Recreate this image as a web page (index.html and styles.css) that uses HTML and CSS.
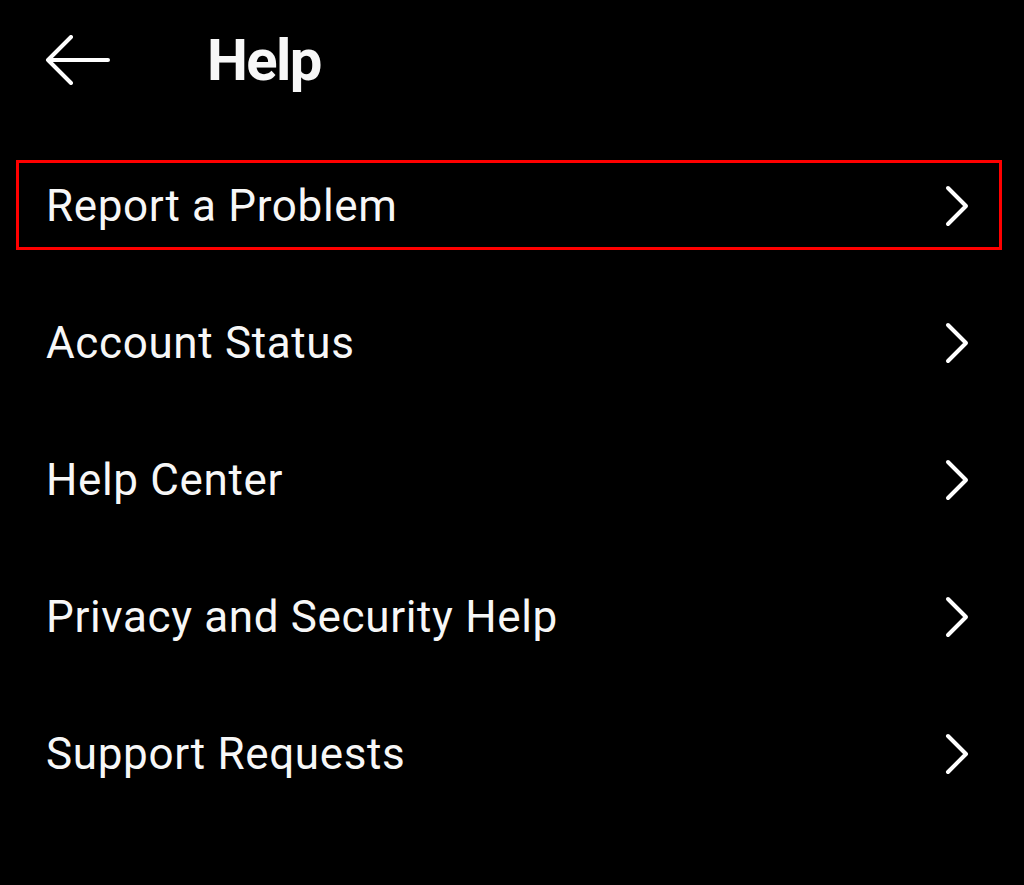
FILE: index.html
```html
<!DOCTYPE html>
<html lang="en">
<head>
    <meta charset="UTF-8">
    <meta name="viewport" content="width=device-width, initial-scale=1.0">
    <title>Help</title>
    <link rel="stylesheet" href="styles.css">
</head>
<body>
    <!-- Top bar -->
    <header class="top-bar">
        <svg class="back-icon" width="68" height="50" viewBox="0 0 68 50">
            <path d="M64 25 H4 M27 2 L4 25 L27 48" fill="none" stroke="#fff" stroke-width="4" stroke-linecap="round" stroke-linejoin="round"/>
        </svg>
        <h1 class="title">Help</h1>
    </header>

    <!-- Help options -->
    <ul class="menu">
        <li class="menu-item highlight">
            <span>Report a Problem</span>
            <svg class="chevron" width="26" height="42" viewBox="0 0 26 42"><path d="M4 3 L22 21 L4 39" fill="none" stroke="#fff" stroke-width="4" stroke-linecap="round" stroke-linejoin="round"/></svg>
        </li>
        <li class="menu-item">
            <span>Account Status</span>
            <svg class="chevron" width="26" height="42" viewBox="0 0 26 42"><path d="M4 3 L22 21 L4 39" fill="none" stroke="#fff" stroke-width="4" stroke-linecap="round" stroke-linejoin="round"/></svg>
        </li>
        <li class="menu-item">
            <span>Help Center</span>
            <svg class="chevron" width="26" height="42" viewBox="0 0 26 42"><path d="M4 3 L22 21 L4 39" fill="none" stroke="#fff" stroke-width="4" stroke-linecap="round" stroke-linejoin="round"/></svg>
        </li>
        <li class="menu-item">
            <span>Privacy and Security Help</span>
            <svg class="chevron" width="26" height="42" viewBox="0 0 26 42"><path d="M4 3 L22 21 L4 39" fill="none" stroke="#fff" stroke-width="4" stroke-linecap="round" stroke-linejoin="round"/></svg>
        </li>
        <li class="menu-item">
            <span>Support Requests</span>
            <svg class="chevron" width="26" height="42" viewBox="0 0 26 42"><path d="M4 3 L22 21 L4 39" fill="none" stroke="#fff" stroke-width="4" stroke-linecap="round" stroke-linejoin="round"/></svg>
        </li>
    </ul>
</body>
</html>
```

FILE: styles.css
```css
body {
    margin: 0;
    background-color: #000;
    color: #f7f7f7;
    font-family: Roboto, 'Noto Sans', sans-serif;
    height: 885px;
    overflow: hidden;
}
.top-bar {
    height: 120px;
    display: flex;
    align-items: center;
    padding-left: 44px;
}
.back-icon {
    display: block;
}
.title {
    margin: 0 0 0 95px;
    font-size: 58px;
    font-weight: 700;
    letter-spacing: -1.6px;
    line-height: 1;
}
.menu {
    list-style: none;
    margin: 0;
    padding: 17px 0 0 0;
}
.menu-item {
    position: relative;
    height: 137px;
    display: flex;
    align-items: center;
    justify-content: space-between;
    padding: 0 54px 0 46px;
    font-size: 44px;
    letter-spacing: 0.65px;
}
.chevron {
    display: block;
}
.highlight::after {
    content: "";
    position: absolute;
    top: 23px;
    bottom: 24px;
    left: 16px;
    right: 22px;
    border: 3px solid #f00;
}
```
